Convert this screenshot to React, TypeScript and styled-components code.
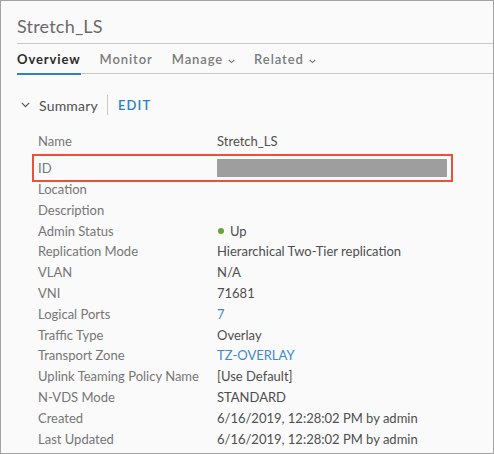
import React from "react";
import styled, { createGlobalStyle } from "styled-components";

const Global = createGlobalStyle`
  html, body { margin: 0; padding: 0; background: #ffffff; }
  body { font-family: "Lato", "Liberation Sans", sans-serif; }
`;

const Panel = styled.div`
  box-sizing: border-box;
  width: 494px;
  height: 454px;
  border: 1px solid #a3a3a3;
  background: #fafafa;
  padding-left: 16px;
  overflow: hidden;
`;

const Header = styled.div`
  height: 42px;
  border-bottom: 1px solid #c9c9c9;
  display: flex;
  align-items: flex-end;
`;

const Title = styled.h1`
  margin: 0 0 5px 0;
  font-size: 18px;
  font-weight: 400;
  color: #6a6a6a;
  line-height: 24px;
  letter-spacing: 0.2px;
`;

const TabBar = styled.div`
  display: flex;
  height: 29px;
  border-bottom: 1px solid #c9c9c9;
  gap: 19px;
`;

const Tab = styled.div<{ $active?: boolean }>`
  display: flex;
  align-items: center;
  gap: 5px;
  height: 28px;
  padding-top: 1px;
  margin-bottom: -1px;
  border-bottom: 2px solid ${(p) => (p.$active ? "#2f80c7" : "transparent")};
  font-size: 13px;
  letter-spacing: 0.9px;
  font-weight: ${(p) => (p.$active ? 700 : 600)};
  color: ${(p) => (p.$active ? "#2b2b2b" : "#7a7a7a")};
`;

const Caret = () => (
  <svg width="7" height="5" viewBox="0 0 7 5" style={{ marginTop: 4 }}>
    <path d="M0.8 1 L3.5 3.6 L6.2 1" fill="none" stroke="#777" strokeWidth="1.1" />
  </svg>
);

const SectionHead = styled.div`
  display: flex;
  align-items: center;
  height: 22px;
  margin-top: 20px;
  padding-left: 4px;
`;

const SectionTitle = styled.span`
  margin-left: 9px;
  font-size: 14px;
  color: #4f4f4f;
  letter-spacing: 0.2px;
`;

const Divider = styled.span`
  width: 1px;
  height: 20px;
  background: #c8c8c8;
  margin: 0 10px 0 9px;
`;

const EditLink = styled.span`
  font-size: 13px;
  font-weight: 600;
  letter-spacing: 1.1px;
  color: #2d7fc2;
`;

const List = styled.div`
  margin-top: 15px;
  padding-left: 21px;
  display: flex;
  flex-direction: column;
`;

const Row = styled.div<{ $marked?: boolean }>`
  position: relative;
  display: grid;
  grid-template-columns: 179px 1fr;
  height: 20.8px;
  align-items: center;
  font-size: 13px;
  margin: ${(p) => (p.$marked ? "6px 0 0 0" : "0")};
  ${(p) =>
    p.$marked
      ? `&::after {
    content: "";
    position: absolute;
    left: -6px;
    top: -4px;
    width: 421px;
    height: 28px;
    border: 2px solid #e8523d;
    box-sizing: border-box;
  }`
      : ""}
`;

const Label = styled.span`
  color: #767676;
`;

const Value = styled.span<{ $link?: boolean }>`
  color: ${(p) => (p.$link ? "#3a8bd0" : "#4e4e4e")};
  display: flex;
  align-items: center;
`;

const Redacted = styled.span`
  width: 230px;
  height: 18px;
  background: #9e9e9e;
`;

const Dot = styled.span`
  width: 6px;
  height: 6px;
  border-radius: 50%;
  background: #62a830;
  margin: 1px 6px 0 1px;
`;

const rows: { label: string; value?: React.ReactNode; link?: boolean }[] = [
  { label: "Location" },
  { label: "Description" },
  { label: "Admin Status", value: (<><Dot />Up</>) },
  { label: "Replication Mode", value: "Hierarchical Two-Tier replication" },
  { label: "VLAN", value: "N/A" },
  { label: "VNI", value: "71681" },
  { label: "Logical Ports", value: "7", link: true },
  { label: "Traffic Type", value: "Overlay" },
  { label: "Transport Zone", value: "TZ-OVERLAY", link: true },
  { label: "Uplink Teaming Policy Name", value: "[Use Default]" },
  { label: "N-VDS Mode", value: "STANDARD" },
  { label: "Created", value: "6/16/2019, 12:28:02 PM by admin" },
  { label: "Last Updated", value: "6/16/2019, 12:28:02 PM by admin" },
];

export default function App() {
  return (
    <>
      <Global />
      <Panel>
        <Header>
          <Title>Stretch_LS</Title>
        </Header>
        <TabBar>
          <Tab $active>Overview</Tab>
          <Tab>Monitor</Tab>
          <Tab>Manage<Caret /></Tab>
          <Tab>Related<Caret /></Tab>
        </TabBar>
        <SectionHead>
          <svg width="9" height="6" viewBox="0 0 9 6">
            <path d="M0.8 0.8 L4.5 4.6 L8.2 0.8" fill="none" stroke="#555" strokeWidth="1.2" />
          </svg>
          <SectionTitle>Summary</SectionTitle>
          <Divider />
          <EditLink>EDIT</EditLink>
        </SectionHead>
        <List>
          <Row>
            <Label>Name</Label>
            <Value>Stretch_LS</Value>
          </Row>
          <Row $marked>
            <Label>ID</Label>
            <Value><Redacted /></Value>
          </Row>
          {rows.map((r) => (
            <Row key={r.label}>
              <Label>{r.label}</Label>
              <Value $link={r.link}>{r.value}</Value>
            </Row>
          ))}
        </List>
      </Panel>
    </>
  );
}
